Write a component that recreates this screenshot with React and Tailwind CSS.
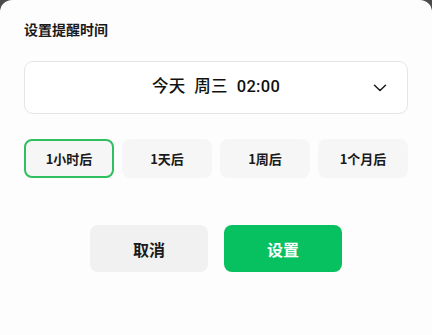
import { useState } from 'react';

const OPTIONS = ['1小时后', '1天后', '1周后', '1个月后'];

export default function App() {
  const [picked, setPicked] = useState(0);

  return (
    <div
      className="h-[335px] w-[432px] bg-[#4b4b4b]"
      style={{ fontFamily: '"Noto Sans CJK SC", "Noto Sans", sans-serif' }}
    >
      <div className="flex h-full flex-col rounded-t-[12px] bg-[#fdfdfd] px-6 pt-[19px]">
        <h2 className="text-[14px] font-bold leading-5 text-[#1a1a1a]">设置提醒时间</h2>

        <button
          type="button"
          className="relative mt-[22px] flex h-[53px] items-center justify-center rounded-[9px] border border-[#e6e6e6] bg-white text-[16.5px] font-medium text-[#111]"
          style={{ fontFamily: 'Roboto, "Noto Sans CJK SC", sans-serif' }}
        >
          <span className="tracking-[0.3px]">今天&nbsp; 周三&nbsp; 02:00</span>
          <svg
            className="absolute right-[20px] top-1/2 -translate-y-1/2"
            width="14"
            height="9"
            viewBox="0 0 14 9"
            fill="none"
          >
            <path d="M1.5 1.8 7 7 12.5 1.8" stroke="#1a1a1a" strokeWidth="1.5" strokeLinecap="round" strokeLinejoin="round" />
          </svg>
        </button>

        <div className="mt-[25px] grid grid-cols-4 gap-2">
          {OPTIONS.map((label, i) => (
            <button
              key={label}
              type="button"
              onClick={() => setPicked(i)}
              className={
                i === picked
                  ? 'flex h-[39px] items-center justify-center rounded-[8px] border-2 border-[#2fbf5f] bg-[#f6f6f6] text-[13px] font-bold text-[#1a1a1a]'
                  : 'flex h-[39px] items-center justify-center rounded-[8px] border-2 border-transparent bg-[#f6f6f6] text-[13px] font-bold text-[#1a1a1a]'
              }
            >
              {label}
            </button>
          ))}
        </div>

        <div className="mt-[47px] flex justify-center gap-4">
          <button
            type="button"
            className="flex h-[47px] w-[118px] items-center justify-center rounded-[8px] bg-[#f1f1f1] text-[16px] font-bold text-[#1a1a1a]"
          >
            取消
          </button>
          <button
            type="button"
            className="flex h-[47px] w-[118px] items-center justify-center rounded-[8px] bg-[#07c160] text-[16px] font-bold text-white"
          >
            设置
          </button>
        </div>
      </div>
    </div>
  );
}
